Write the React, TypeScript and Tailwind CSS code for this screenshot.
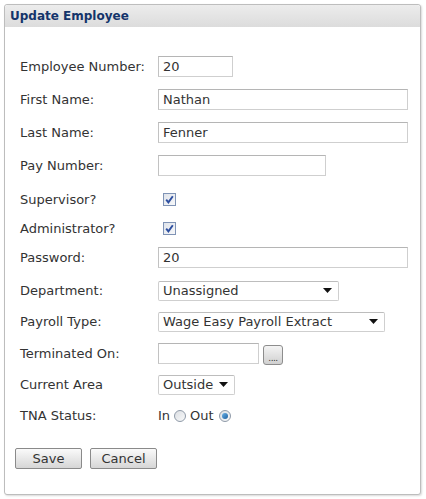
import React from "react";

const font = { fontFamily: '"DejaVu Sans", Verdana, sans-serif' };

function TextBox({ w, value }: { w: string; value?: string }) {
  return (
    <div
      className={`${w} h-[21px] border border-[#cfcfcf] border-t-[#b5b5b5] border-l-[#c2c2c2] bg-white pl-[4px] flex items-center text-[13px] text-[#333]`}
    >
      {value}
    </div>
  );
}

function Select({ w, value }: { w: string; value: string }) {
  return (
    <div
      className={`${w} h-[20px] border border-[#cfcfcf] border-t-[#bdbdbd] bg-white pl-[4px] pr-[6px] flex items-center justify-between text-[13px] text-[#333] rounded-[2px]`}
    >
      <span>{value}</span>
      <svg width="9" height="5" viewBox="0 0 9 5">
        <path d="M0 0 L9 0 L4.5 5 Z" fill="#111" />
      </svg>
    </div>
  );
}

function Check() {
  return (
    <div className="ml-[5px] w-[13px] h-[13px] border border-[#7f93b5] bg-gradient-to-br from-[#dfe3ea] to-[#f7f8fa] flex items-center justify-center">
      <svg width="9" height="9" viewBox="0 0 9 9">
        <path d="M1.2 4.6 L3.4 7.4 L7.8 1.2" stroke="#2d4fa0" strokeWidth="1.9" fill="none" />
      </svg>
    </div>
  );
}

function Radio({ checked }: { checked?: boolean }) {
  return (
    <div className="w-[12px] h-[12px] rounded-full border border-[#8f9aa8] bg-gradient-to-br from-[#dcdfe3] to-[#f8f9fa] flex items-center justify-center">
      {checked && <div className="w-[6px] h-[6px] rounded-full bg-gradient-to-br from-[#6bb3e8] to-[#1a5f9e]" />}
    </div>
  );
}

function Row({
  label,
  mt,
  h,
  children,
}: {
  label: string;
  mt: string;
  h: string;
  children: React.ReactNode;
}) {
  return (
    <div className={`flex items-center ${mt} ${h}`}>
      <div className="w-[138px] text-[13px] text-[#333]">{label}</div>
      <div className="flex items-center">{children}</div>
    </div>
  );
}

export default function App() {
  return (
    <div className="w-[426px] h-[499px] bg-white pt-[4px] pl-[4px]" style={font}>
      <div className="w-[417px] h-[491px] border border-[#bdbdbd] rounded-[3px] shadow-[1px_1px_2px_rgba(0,0,0,0.15)] bg-white flex flex-col">
        <div className="h-[22px] bg-gradient-to-b from-[#ececec] to-[#dcdcdc] flex items-center pl-[5px] text-[12px] font-bold text-[#14346a] rounded-t-[3px]">
          Update Employee
        </div>
        <div className="pl-[15px] flex flex-col">
          <Row label="Employee Number:" mt="mt-[29px]" h="h-[21px]">
            <TextBox w="w-[75px]" value="20" />
          </Row>
          <Row label="First Name:" mt="mt-[12px]" h="h-[21px]">
            <TextBox w="w-[250px]" value="Nathan" />
          </Row>
          <Row label="Last Name:" mt="mt-[12px]" h="h-[21px]">
            <TextBox w="w-[250px]" value="Fenner" />
          </Row>
          <Row label="Pay Number:" mt="mt-[12px]" h="h-[21px]">
            <TextBox w="w-[168px]" />
          </Row>
          <Row label="Supervisor?" mt="mt-[13px]" h="h-[21px]">
            <Check />
          </Row>
          <Row label="Administrator?" mt="mt-[8px]" h="h-[21px]">
            <Check />
          </Row>
          <Row label="Password:" mt="mt-[8px]" h="h-[21px]">
            <TextBox w="w-[250px]" value="20" />
          </Row>
          <Row label="Department:" mt="mt-[12px]" h="h-[21px]">
            <Select w="w-[181px]" value="Unassigned" />
          </Row>
          <Row label="Payroll Type:" mt="mt-[10px]" h="h-[21px]">
            <Select w="w-[227px]" value="Wage Easy Payroll Extract" />
          </Row>
          <Row label="Terminated On:" mt="mt-[10px]" h="h-[23px]">
            <TextBox w="w-[101px]" />
            <div className="ml-[4px] mt-[2px] w-[20px] h-[20px] border border-[#8d8d8d] rounded-[3px] bg-gradient-to-b from-[#f4f4f4] to-[#d0d0d0] flex items-end justify-center pb-[3px]">
              <span className="text-[9px] leading-[6px] text-[#333] tracking-[-0.5px]">....</span>
            </div>
          </Row>
          <Row label="Current Area" mt="mt-[9px]" h="h-[21px]">
            <Select w="w-[77px]" value="Outside" />
          </Row>
          <Row label="TNA Status:" mt="mt-[10px]" h="h-[21px]">
            <span className="text-[13px] text-[#333]">In</span>
            <div className="ml-[4px]">
              <Radio />
            </div>
            <span className="ml-[4px] text-[13px] text-[#333]">Out</span>
            <div className="ml-[5px]">
              <Radio checked />
            </div>
          </Row>
          <div className="flex mt-[22px] -ml-[5px] gap-[8px]">
            <button className="w-[67px] h-[21px] border border-[#8a8a8a] rounded-[2px] bg-gradient-to-b from-[#fafafa] to-[#d6d6d6] text-[13px] text-[#333] flex items-center justify-center">
              Save
            </button>
            <button className="w-[67px] h-[21px] border border-[#8a8a8a] rounded-[2px] bg-gradient-to-b from-[#fafafa] to-[#d6d6d6] text-[13px] text-[#333] flex items-center justify-center">
              Cancel
            </button>
          </div>
        </div>
      </div>
    </div>
  );
}
